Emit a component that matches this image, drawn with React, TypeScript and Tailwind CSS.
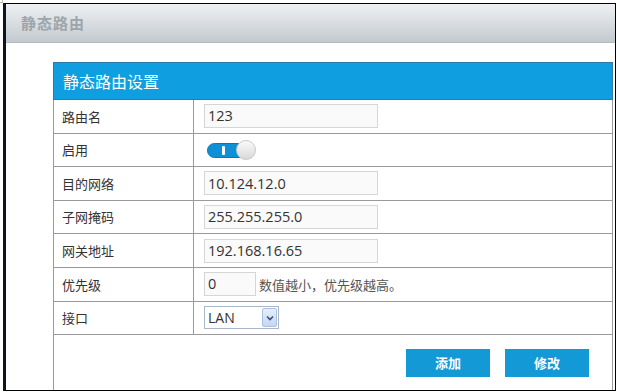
import React from 'react'

const cjk = { fontFamily: '"Noto Sans CJK SC", "Noto Sans", sans-serif' }
const num = { fontFamily: '"Open Sans", "Noto Sans CJK SC", sans-serif' }

function Row({ label, children }: { label: string; children: React.ReactNode }) {
  return (
    <div className="flex h-[33.6px] border-b border-[#9a9a9a]">
      <div className="w-[140px] shrink-0 border-r border-[#9a9a9a] pl-[8px] flex items-center text-[13px] text-[#333]">
        {label}
      </div>
      <div className="flex-1 flex items-center pl-[10px]">{children}</div>
    </div>
  )
}

function TextBox({ value, width = 'w-[174px]' }: { value: string; width?: string }) {
  return (
    <div
      className={`${width} h-[24px] border border-[#d6d6d6] bg-[#fafafa] pl-[3px] flex items-center text-[14.5px] text-[#333]`}
      style={num}
    >
      {value}
    </div>
  )
}

function Toggle() {
  return (
    <div className="relative w-[50px] h-[20px] ml-[3px]">
      <div className="absolute left-0 top-[3px] w-[40px] h-[15px] rounded-full bg-[#0f8fd6] border border-[#0a78b8]" />
      <div className="absolute left-[15px] top-[6px] w-[3px] h-[9px] bg-white rounded-[1px]" />
      <div className="absolute left-[29px] top-0 w-[20px] h-[20px] rounded-full bg-linear-to-b from-[#fafafa] to-[#d9d9d9] border border-[#c8c8c8]" />
    </div>
  )
}

function Select() {
  return (
    <div className="w-[75px] h-[23px] border border-[#a9b8c8] bg-white flex items-center justify-between pl-[3px] pr-[1px]" style={num}>
      <span className="text-[14px] text-[#333]">LAN</span>
      <div className="w-[15px] h-[19px] border border-[#aac0e0] rounded-[2px] bg-linear-to-b from-[#e6effc] to-[#c3d6f5] flex items-center justify-center">
        <svg width="8" height="6" viewBox="0 0 8 6">
          <path d="M1 1.5 L4 4.5 L7 1.5" stroke="#3d4f6b" strokeWidth="1.6" fill="none" />
        </svg>
      </div>
    </div>
  )
}

export default function App() {
  return (
    <div className="w-[617px] h-[392px] bg-white relative overflow-hidden" style={cjk}>
      <div className="absolute left-0 top-0 w-[3px] h-[3px] border-r border-b border-[#bbb]" />
      <div className="ml-[3px] mt-[3px] w-[613px] h-[388px] border-l-[3px] border-l-[#0c1620] border-t border-r border-b border-black flex flex-col overflow-hidden">
        {/* page title bar */}
        <div className="h-[39px] shrink-0 bg-linear-to-b from-[#eef1f3] to-[#c3c9ce] border-b border-[#b4babf] pl-[15px] flex items-center">
          <span className="text-[15px] font-semibold tracking-[1px] text-[#9ca5ab]">静态路由</span>
        </div>

        <div className="flex-1 pt-[19px] pl-[47px] pr-[2px]">
          <div className="border-l border-r border-[#9a9a9a] h-full">
            <div className="h-[38px] bg-[#0f9fe0] border border-[#2f7aa6] -mx-px flex items-center pl-[9px] text-[16px] text-white">
              静态路由设置
            </div>

            <Row label="路由名">
              <TextBox value="123" />
            </Row>
            <Row label="启用">
              <Toggle />
            </Row>
            <Row label="目的网络">
              <TextBox value="10.124.12.0" />
            </Row>
            <Row label="子网掩码">
              <TextBox value="255.255.255.0" />
            </Row>
            <Row label="网关地址">
              <TextBox value="192.168.16.65" />
            </Row>
            <Row label="优先级">
              <TextBox value="0" width="w-[52px]" />
              <span className="ml-[3px] text-[13px] text-[#555]">数值越小，优先级越高。</span>
            </Row>
            <Row label="接口">
              <Select />
            </Row>

            <div className="flex justify-end gap-[15px] pt-[14px] pr-[23px]">
              <button className="w-[84px] h-[28px] bg-[#1399d6] text-white text-[13px] font-bold">添加</button>
              <button className="w-[84px] h-[28px] bg-[#1399d6] text-white text-[13px] font-bold">修改</button>
            </div>
          </div>
        </div>
      </div>
    </div>
  )
}
